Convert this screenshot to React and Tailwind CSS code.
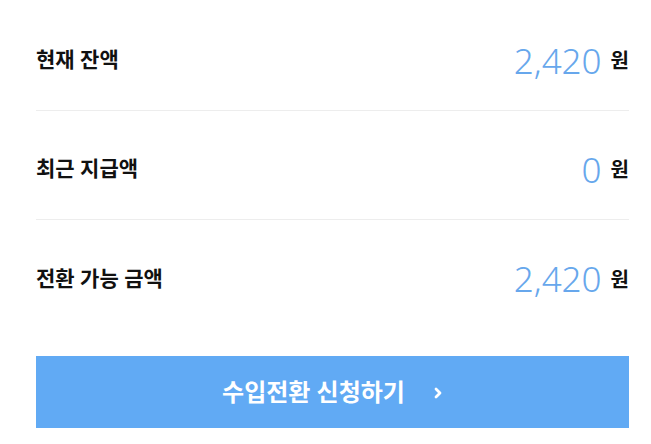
const rows = [
  { label: "현재 잔액", value: "2,420" },
  { label: "최근 지급액", value: "0" },
  { label: "전환 가능 금액", value: "2,420" },
];

export default function App() {
  return (
    <div className="w-[651px] h-[444px] bg-white pl-[36px] pr-[22px] pt-[2px] font-['Noto_Sans','Noto_Sans_CJK_KR',sans-serif]">
      {rows.map((row, i) => (
        <div
          key={row.label}
          className={`flex h-[109px] items-center justify-between pt-[8px] ${i < rows.length - 1 ? "border-b border-[#ededed]" : ""}`}
        >
          <span className="text-[21px] font-semibold text-[#111]">{row.label}</span>
          <div className="flex items-center gap-[9px]">
            <span className="text-[35px] font-light leading-none text-[#67a7ec] font-['Noto_Sans',sans-serif]">{row.value}</span>
            <span className="text-[20px] font-bold text-[#111] mt-[2px]">원</span>
          </div>
        </div>
      ))}
      <button className="mt-[27px] flex h-[72px] w-full items-center justify-center gap-[28px] bg-[#61aaf4] text-white">
        <span className="text-[24px] font-bold">수입전환 신청하기</span>
        <svg width="10" height="12" viewBox="0 0 10 12" className="mt-[2px]">
          <path d="M3 2 L7 6 L3 10" fill="none" stroke="white" strokeWidth="2.8" strokeLinecap="round" strokeLinejoin="round" />
        </svg>
      </button>
    </div>
  );
}
